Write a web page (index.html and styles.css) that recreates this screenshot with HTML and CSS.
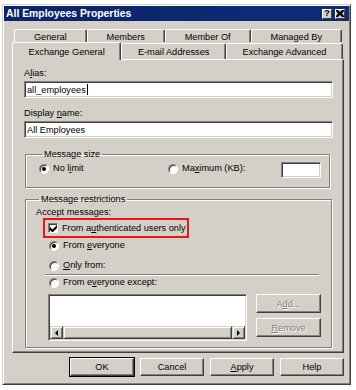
FILE: index.html
```html
<!DOCTYPE html>
<html lang="en">
  <head>
    <meta charset="UTF-8" />
    <title>All Employees Properties</title>
    <link rel="stylesheet" href="styles.css">
  </head>
  <body>
    <div class="window">
      <!-- caption bar -->
      <div class="titlebar">
        <span class="title">All Employees Properties</span>
        <span class="cap-btn cap-help">?</span>
        <span class="cap-btn cap-close">
          <svg viewBox="0 0 8 7" width="8" height="7"><path d="M0 0h2l2 2 2-2h2v1L6 3.5 8 6v1H6L4 5 2 7H0V6l2-2.5L0 1z" fill="#000"/></svg>
        </span>
      </div>

      <!-- tabs -->
      <div class="tabs">
        <div class="tab-row tab-row-back">
          <div class="tab">General</div>
          <div class="tab">Members</div>
          <div class="tab">Member Of</div>
          <div class="tab">Managed By</div>
        </div>
        <div class="tab-row tab-row-front">
          <div class="tab tab-active">Exchange General</div>
          <div class="tab">E-mail Addresses</div>
          <div class="tab">Exchange Advanced</div>
        </div>
      </div>

      <div class="panel">
        <div class="field-label">A<u>l</u>ias:</div>
        <div class="textbox">all_employees<span class="caret"></span></div>
        <div class="field-label field-label-gap">Display <u>n</u>ame:</div>
        <div class="textbox">All Employees</div>

        <fieldset class="group group-size">
          <legend>Message size</legend>
          <div class="size-row">
            <label class="option option-nolimit"><span class="radio checked"></span><span>No l<u>i</u>mit</span></label>
            <label class="option"><span class="radio"></span><span>Ma<u>x</u>imum (KB):</span></label>
            <div class="textbox textbox-small"></div>
          </div>
        </fieldset>

        <fieldset class="group group-restrict">
          <legend>Message restrictions</legend>
          <div class="accept-label">Accept messages:</div>
          <div class="highlight">
            <label class="option">
              <span class="checkbox">
                <svg viewBox="0 0 7 7" width="7" height="7"><path d="M0 2v3l2 2h1l4-4V0L2.5 4.5z" fill="#000"/></svg>
              </span>
              <span>From a<u>u</u>thenticated users only</span>
            </label>
          </div>
          <label class="option opt-row opt-everyone"><span class="radio checked"></span><span>From <u>e</u>veryone</span></label>
          <label class="option opt-row opt-only"><span class="radio"></span><span><u>O</u>nly from:</span></label>
          <div class="separator"></div>
          <label class="option opt-row opt-except"><span class="radio"></span><span>From e<u>v</u>eryone except:</span></label>

          <div class="list-row">
            <div class="listbox">
              <div class="hscroll">
                <span class="scroll-btn"><span class="arrow-left"></span></span>
                <span class="scroll-thumb"></span>
                <span class="scroll-btn"><span class="arrow-right"></span></span>
              </div>
            </div>
            <div class="list-buttons">
              <button class="btn btn-disabled">A<u>d</u>d...</button>
              <button class="btn btn-disabled"><u>R</u>emove</button>
            </div>
          </div>
        </fieldset>
      </div>

      <div class="button-bar">
        <button class="btn btn-default">OK</button>
        <button class="btn">Cancel</button>
        <button class="btn"><u>A</u>pply</button>
        <button class="btn">Help</button>
      </div>
    </div>
  </body>
</html>
```

FILE: styles.css
```css
* {
  box-sizing: border-box;
}
body {
  margin: 0;
  background-color: #ffffff;
  font-family: "Liberation Sans", Arial, sans-serif;
  font-size: 9.2px;
  color: #000;
}
.window {
  margin: 4px 0 0 2px;
  width: 349px;
  height: 381px;
  padding: 1px;
  background-color: #d4d0c8;
  border: 1px solid;
  border-color: #d4d0c8 #404040 #404040 #d4d0c8;
  box-shadow: inset 1px 1px #fff, inset -1px -1px #808080;
}
.titlebar {
  height: 15px;
  display: flex;
  align-items: center;
  gap: 2px;
  padding: 0 4px 0 2px;
  background: linear-gradient(to right, #0a246a, #0e2c78);
}
.title {
  flex: 1;
  color: #fff;
  font-weight: bold;
  font-size: 10.4px;
}
.cap-btn {
  width: 10px;
  height: 10px;
  display: flex;
  align-items: center;
  justify-content: center;
  background-color: #d4d0c8;
  border: 1px solid;
  border-color: #fff #404040 #404040 #fff;
  font-weight: bold;
  font-size: 9px;
  line-height: 1;
}
.cap-close {
  margin-left: 1px;
}

/* tabs */
.tabs {
  margin: 8px 5px 0 8px;
}
.tab-row {
  display: flex;
  padding: 0 2px;
}
.tab-row-back {
  height: 13px;
}
.tab-row-front {
  height: 17px;
  padding: 1px 1px 0 2px;
}
.tab {
  flex: 1 1 auto;
  display: flex;
  align-items: center;
  justify-content: center;
  border-top: 1px solid #fff;
  border-left: 1px solid #fff;
  border-right: 1px solid #404040;
  box-shadow: inset -1px 0 #808080;
  border-radius: 2px 2px 0 0;
  white-space: nowrap;
}
.tab-row-back .tab {
  padding-top: 1px;
}
.tab-active {
  margin: -1px 0 -1px -2px;
  position: relative;
  background-color: #d4d0c8;
}

/* page */
.panel {
  margin: 0 5px 0 8px;
  height: 294px;
  padding: 8px 10px 0 11px;
  border: 1px solid;
  border-color: #fff #404040 #404040 #fff;
  box-shadow: inset -1px -1px #808080;
}
.field-label {
  line-height: 11px;
}
.field-label-gap {
  margin-top: 10px;
}
.textbox {
  height: 17px;
  margin-top: 2px;
  padding: 2px 2px 0 2px;
  background-color: #fff;
  border: 1px solid;
  border-color: #808080 #fff #fff #808080;
  box-shadow: inset 1px 1px #404040, inset -1px -1px #d4d0c8;
  line-height: 12px;
  white-space: nowrap;
}
.caret {
  display: inline-block;
  width: 1px;
  height: 11px;
  margin-left: 1px;
  vertical-align: -2px;
  background-color: #000;
}

/* group boxes */
.group {
  margin: 0 3px 0 1px;
  border: 1px solid #808080;
  box-shadow: inset 1px 1px #fff, 1px 1px #fff;
  padding: 0 10px;
}
.group legend {
  padding: 0 2px;
  margin-left: 3px;
  line-height: 11px;
}
.group-size {
  margin-top: 11px;
  padding: 2px 8px 9px 13px;
}
.size-row {
  display: flex;
  align-items: flex-start;
}
.option {
  display: flex;
  align-items: center;
  gap: 4px;
  line-height: 11px;
  white-space: nowrap;
}
.option-nolimit {
  width: 129px;
  margin-top: 1px;
}
.size-row .option + .option {
  margin-top: 1px;
}
.textbox-small {
  margin: 0 0 0 auto;
  width: 40px;
  height: 16px;
}
.radio {
  width: 10px;
  height: 10px;
  border-radius: 50%;
  border: 1px solid;
  border-color: #808080 #fff #fff #808080;
  background-color: #fff;
  box-shadow: inset 1px 1px #404040;
  position: relative;
  flex: none;
}
.radio.checked::after {
  content: "";
  position: absolute;
  left: 2px;
  top: 2px;
  width: 4px;
  height: 4px;
  border-radius: 50%;
  background-color: #000;
}
.checkbox {
  width: 10px;
  height: 10px;
  flex: none;
  display: flex;
  align-items: center;
  justify-content: center;
  background-color: #fff;
  border: 1px solid;
  border-color: #808080 #fff #fff #808080;
  box-shadow: inset 1px 1px #404040;
}
.group-restrict {
  margin-top: 6px;
  padding: 2px 10px 6px 10px;
}
.accept-label {
  line-height: 11px;
}
.highlight {
  margin-left: 7px;
  width: 146px;
  height: 20px;
  padding-left: 3px;
  border: 2px solid #e8141a;
  display: flex;
  align-items: center;
}
.opt-row {
  margin-left: 13px;
}
.opt-everyone {
  margin-top: 2px;
}
.opt-only {
  margin-top: 9px;
}
.separator {
  margin: 3px 2px 0 9px;
  height: 2px;
  border-top: 1px solid #808080;
  border-bottom: 1px solid #fff;
}
.opt-except {
  margin-top: 1px;
}
.list-row {
  display: flex;
  gap: 9px;
  margin: 6px 0 0 12px;
}
.listbox {
  width: 199px;
  height: 47px;
  background-color: #fff;
  border: 1px solid;
  border-color: #808080 #fff #fff #808080;
  box-shadow: inset 1px 1px #404040, inset -1px -1px #d4d0c8;
  padding: 1px;
  display: flex;
  flex-direction: column;
  justify-content: flex-end;
}
.hscroll {
  height: 13px;
  display: flex;
  background-color: #e4e1dc;
}
.scroll-btn,
.scroll-thumb {
  background-color: #d4d0c8;
  border: 1px solid;
  border-color: #d4d0c8 #404040 #404040 #d4d0c8;
  box-shadow: inset 1px 1px #fff, inset -1px -1px #808080;
}
.scroll-btn {
  width: 13px;
  display: flex;
  align-items: center;
  justify-content: center;
}
.scroll-thumb {
  flex: 1;
}
.arrow-left {
  border-top: 3px solid transparent;
  border-bottom: 3px solid transparent;
  border-right: 3px solid #000;
}
.arrow-right {
  border-top: 3px solid transparent;
  border-bottom: 3px solid transparent;
  border-left: 3px solid #000;
}
.list-buttons {
  display: flex;
  flex-direction: column;
  gap: 5px;
}

/* push buttons */
.btn {
  font-family: inherit;
  font-size: inherit;
  color: #000;
  width: 64px;
  height: 18px;
  padding: 0;
  background-color: #d4d0c8;
  border: 1px solid;
  border-color: #fff #404040 #404040 #fff;
  box-shadow: inset -1px -1px #808080;
}
.list-buttons .btn {
  width: 65px;
  height: 19px;
}
.btn-disabled {
  color: #808080;
  text-shadow: 1px 1px #fff;
}
.btn-default {
  outline: 1px solid #000;
  outline-offset: 0;
}
.button-bar {
  display: flex;
  justify-content: flex-end;
  gap: 6px;
  margin: 5px 5px 0 0;
}
```
